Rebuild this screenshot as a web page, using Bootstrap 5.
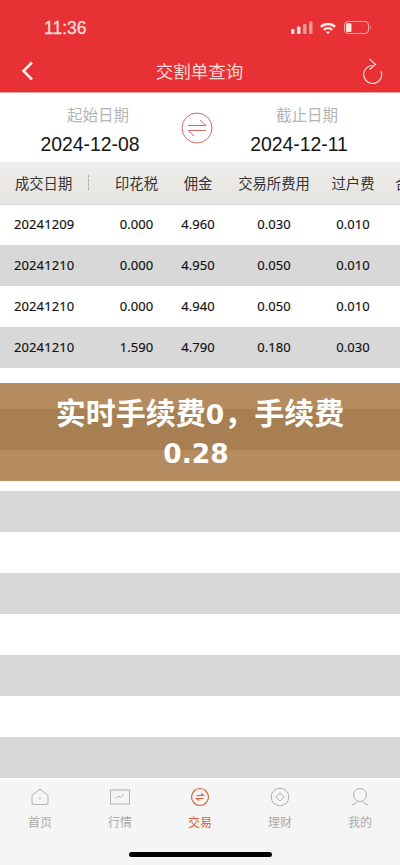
<!DOCTYPE html>
<html lang="zh">
<head>
<meta charset="utf-8">
<meta name="viewport" content="width=device-width, initial-scale=1">
<link href="https://cdn.jsdelivr.net/npm/bootstrap@5.3.0/dist/css/bootstrap.min.css" rel="stylesheet">
<style>
html,body{height:865px;overflow:hidden;background:#fff}
body{font-family:"Liberation Sans","Noto Sans CJK SC",sans-serif}
.phone{width:400px;height:865px;overflow:hidden}
.red-head{background:#e73135;color:#fbe9e6;height:93px;padding-top:17px;border-bottom:1px solid #f3a5a3}
.status-row{height:22px;padding:0 27px 0 44px}
.clock{font-size:17.5px;font-weight:400;-webkit-text-stroke:.3px #f7dcd8;line-height:20px;color:#f7dcd8;font-family:"Liberation Sans",sans-serif}
.title-row{height:40px;margin-top:12px;padding:0 17px 0 20px}
.page-title{font-size:17.5px;color:#f8d8d4;line-height:24px;font-family:"Noto Sans CJK SC",sans-serif;font-weight:400}
.date-bar{height:69px}
.date-first{width:180px}
.date-last{width:186px}
.date-cap{font-size:15.5px;color:#b4b4b4;line-height:20px;margin-top:11px;font-family:"Noto Sans CJK SC",sans-serif}
.date-val{font-size:19.4px;color:#151515;line-height:26px;margin-top:7px}
.swap-wrap{width:34px}
.fee-table{--bs-table-bg:transparent;--bs-table-border-color:transparent;table-layout:fixed;width:440px;margin:0;font-family:"Noto Sans","Noto Sans CJK SC",sans-serif}
.fee-scroll{height:616px;overflow:hidden}
.fee-table th{height:42px;padding:0;background:linear-gradient(#efedea,#e6e4e1);font-family:"Noto Sans CJK SC",sans-serif;font-weight:400;font-size:14.3px;color:#333;vertical-align:middle;text-align:center;border-bottom:1px solid #d8d8d8}
.fee-table td{height:41px;padding:0;font-size:13px;font-weight:400;-webkit-text-stroke:.15px #111;color:#111;vertical-align:middle;text-align:center;letter-spacing:.1px}
.fee-table th:first-child{text-align:left;padding-left:15px;position:relative}
.fee-table td:first-child{text-align:left;padding-left:14px}
.fee-table th:last-child{text-align:left;padding-left:7px}
.sep-dash{position:absolute;left:88px;top:13px;height:15px;border-left:1px dashed #aaa}
.grey-row td{background:#d8d8d8}
.promo{position:absolute;left:0;right:0;top:383px;height:98px;background:rgba(145,84,18,.67);color:#fff;font-family:"Noto Sans CJK SC",sans-serif;font-weight:700;font-size:30px;line-height:39px;padding:9px 30px 0;text-align:center}
.promo-num{font-family:"DejaVu Sans",sans-serif;font-size:26.5px;line-height:1}
.tab-bar{height:87px;background:#f5f5f5;border-top:1px solid #fff;padding-top:8px;position:relative}
.tab-item{width:80px;color:#aaa;font-size:12px;line-height:18px;font-family:"Noto Sans CJK SC",sans-serif}
.tab-item svg{display:block;margin-bottom:6px}
.tab-item.on{color:#d9633d}
.home-bar{position:absolute;left:129px;top:73px;width:143px;height:5px;border-radius:3px;background:#000}
</style>
</head>
<body>
<div class="phone position-relative d-flex flex-column">
  <header class="red-head">
    <div class="status-row d-flex justify-content-between align-items-center">
      <span class="clock">11:36</span>
      <svg width="82" height="16" viewBox="0 0 82 16">
        <g fill="#fbe6e2"><rect x="0" y="9" width="3.5" height="5" rx="1"/><rect x="6" y="6.5" width="3.5" height="7.500" rx="1"/></g>
        <g fill="#f49a98"><rect x="12" y="4" width="3.5" height="10" rx="1"/><rect x="18" y="1.5" width="3.5" height="12.500" rx="1"/></g>
        <path d="M29 6a11.5 11.5 0 0 1 16 0l-1.700 1.800a9 9 0 0 0-12.600 0zM32 9a7.500 7.500 0 0 1 10 0l-1.700 1.800a5 5 0 0 0-6.600 0zM35 12a3.500 3.500 0 0 1 4 0l-2 2.200z" fill="#fbe6e2"/>
        <rect x="53.500" y="1.500" width="24" height="12" rx="3.500" fill="none" stroke="#f6aeaa" stroke-width="1"/>
        <rect x="55" y="3" width="5.500" height="9" rx="1.500" fill="#fbe6e2"/>
        <path d="M79 5.500c1.200.4 1.200 3.600 0 4z" fill="#f49a98"/>
      </svg>
    </div>
    <div class="title-row d-flex justify-content-between align-items-center">
      <svg width="14" height="20" viewBox="0 0 14 20"><path d="M12 1.500 3.500 10l8.500 8.500" fill="none" stroke="#fbe9e6" stroke-width="2.600"/></svg>
      <span class="page-title ms-1">交割单查询</span>
      <svg width="22" height="26" viewBox="0 0 22 26"><path d="M11.500 7.500A9 9 0 1 0 20 13M8.500 1 14.500 6.500 8.500 11.500" fill="none" stroke="#f8d8d4" stroke-width="1.200"/></svg>
    </div>
  </header>
  <section class="date-bar d-flex bg-white text-center">
    <div class="date-first d-flex flex-column"><div class="date-cap ms-3">起始日期</div><div class="date-val">2024-12-08</div></div>
    <div class="swap-wrap d-flex align-items-center justify-content-center">
      <svg width="32" height="32" viewBox="0 0 32 32"><circle cx="16" cy="16" r="15" fill="none" stroke="#cf6a6c" stroke-width="1"/><path d="M7 13.500h18L19 8M25 18.500H7l6 5.500" fill="none" stroke="#cf6a6c" stroke-width="1"/></svg>
    </div>
    <div class="date-last d-flex flex-column"><div class="date-cap">截止日期</div><div class="date-val me-3">2024-12-11</div></div>
  </section>
  <div class="fee-scroll">
    <table class="table fee-table">
      <colgroup><col style="width:107px"><col style="width:59px"><col style="width:64px"><col style="width:88px"><col style="width:70px"><col style="width:52px"></colgroup>
      <thead><tr><th>成交日期<span class="sep-dash"></span></th><th>印花税</th><th>佣金</th><th>交易所费用</th><th>过户费</th><th>合计</th></tr></thead>
      <tbody>
        <tr><td>20241209</td><td>0.000</td><td>4.960</td><td>0.030</td><td>0.010</td><td></td></tr>
        <tr class="grey-row"><td>20241210</td><td>0.000</td><td>4.950</td><td>0.050</td><td>0.010</td><td></td></tr>
        <tr><td>20241210</td><td>0.000</td><td>4.940</td><td>0.050</td><td>0.010</td><td></td></tr>
        <tr class="grey-row"><td>20241210</td><td>1.590</td><td>4.790</td><td>0.180</td><td>0.030</td><td></td></tr>
        <tr><td></td><td></td><td></td><td></td><td></td><td></td></tr>
        <tr class="grey-row"><td></td><td></td><td></td><td></td><td></td><td></td></tr>
        <tr><td></td><td></td><td></td><td></td><td></td><td></td></tr>
        <tr class="grey-row"><td></td><td></td><td></td><td></td><td></td><td></td></tr>
        <tr><td></td><td></td><td></td><td></td><td></td><td></td></tr>
        <tr class="grey-row"><td></td><td></td><td></td><td></td><td></td><td></td></tr>
        <tr><td></td><td></td><td></td><td></td><td></td><td></td></tr>
        <tr class="grey-row"><td></td><td></td><td></td><td></td><td></td><td></td></tr>
        <tr><td></td><td></td><td></td><td></td><td></td><td></td></tr>
        <tr class="grey-row"><td></td><td></td><td></td><td></td><td></td><td></td></tr>
      </tbody>
    </table>
  </div>
  <nav class="tab-bar d-flex">
    <div class="tab-item d-flex flex-column align-items-center">
      <svg width="20" height="20" viewBox="0 0 20 20"><path d="M2 8.500 9 2.800q1-.8 2 0l7 5.700v7q0 2-2 2H4q-2 0-2-2zM10 10v2.500" fill="none" stroke="#b0b0b0" stroke-width="1"/></svg><span>首页</span></div>
    <div class="tab-item d-flex flex-column align-items-center">
      <svg width="20" height="20" viewBox="0 0 20 20"><rect x=".5" y="3" width="19" height="14" fill="none" stroke="#b0b0b0"/><path d="M6 11.500l2.500-2.500 2 1.500 3-3" fill="none" stroke="#b0b0b0"/></svg><span>行情</span></div>
    <div class="tab-item on d-flex flex-column align-items-center">
      <svg width="20" height="20" viewBox="0 0 20 20"><circle cx="10" cy="10" r="8.500" fill="none" stroke="#d9633d" stroke-width="1.200"/><path d="M6.500 8.500h7L11 6.500M13.500 11.500h-7l2.500 2" fill="none" stroke="#d9633d" stroke-width="1.100"/></svg><span>交易</span></div>
    <div class="tab-item d-flex flex-column align-items-center">
      <svg width="20" height="20" viewBox="0 0 20 20"><circle cx="10" cy="10" r="8.800" fill="none" stroke="#b0b0b0"/><path d="M10 6 14 10 10 14 6 10z" fill="none" stroke="#b0b0b0"/></svg><span>理财</span></div>
    <div class="tab-item d-flex flex-column align-items-center">
      <svg width="20" height="20" viewBox="0 0 20 20"><circle cx="10" cy="8" r="6.500" fill="none" stroke="#b0b0b0"/><path d="M7.500 14.500Q7 16 2 18M12.500 14.500Q13 16 18 18" fill="none" stroke="#b0b0b0"/></svg><span>我的</span></div>
    <div class="home-bar"></div>
  </nav>
  <div class="promo">实时手续费<span class="promo-num">0</span>，手续费<br><span class="promo-num pe-2">0.28</span></div>
</div>
<script src="https://cdn.jsdelivr.net/npm/bootstrap@5.3.0/dist/js/bootstrap.bundle.min.js"></script>
</body>
</html>
